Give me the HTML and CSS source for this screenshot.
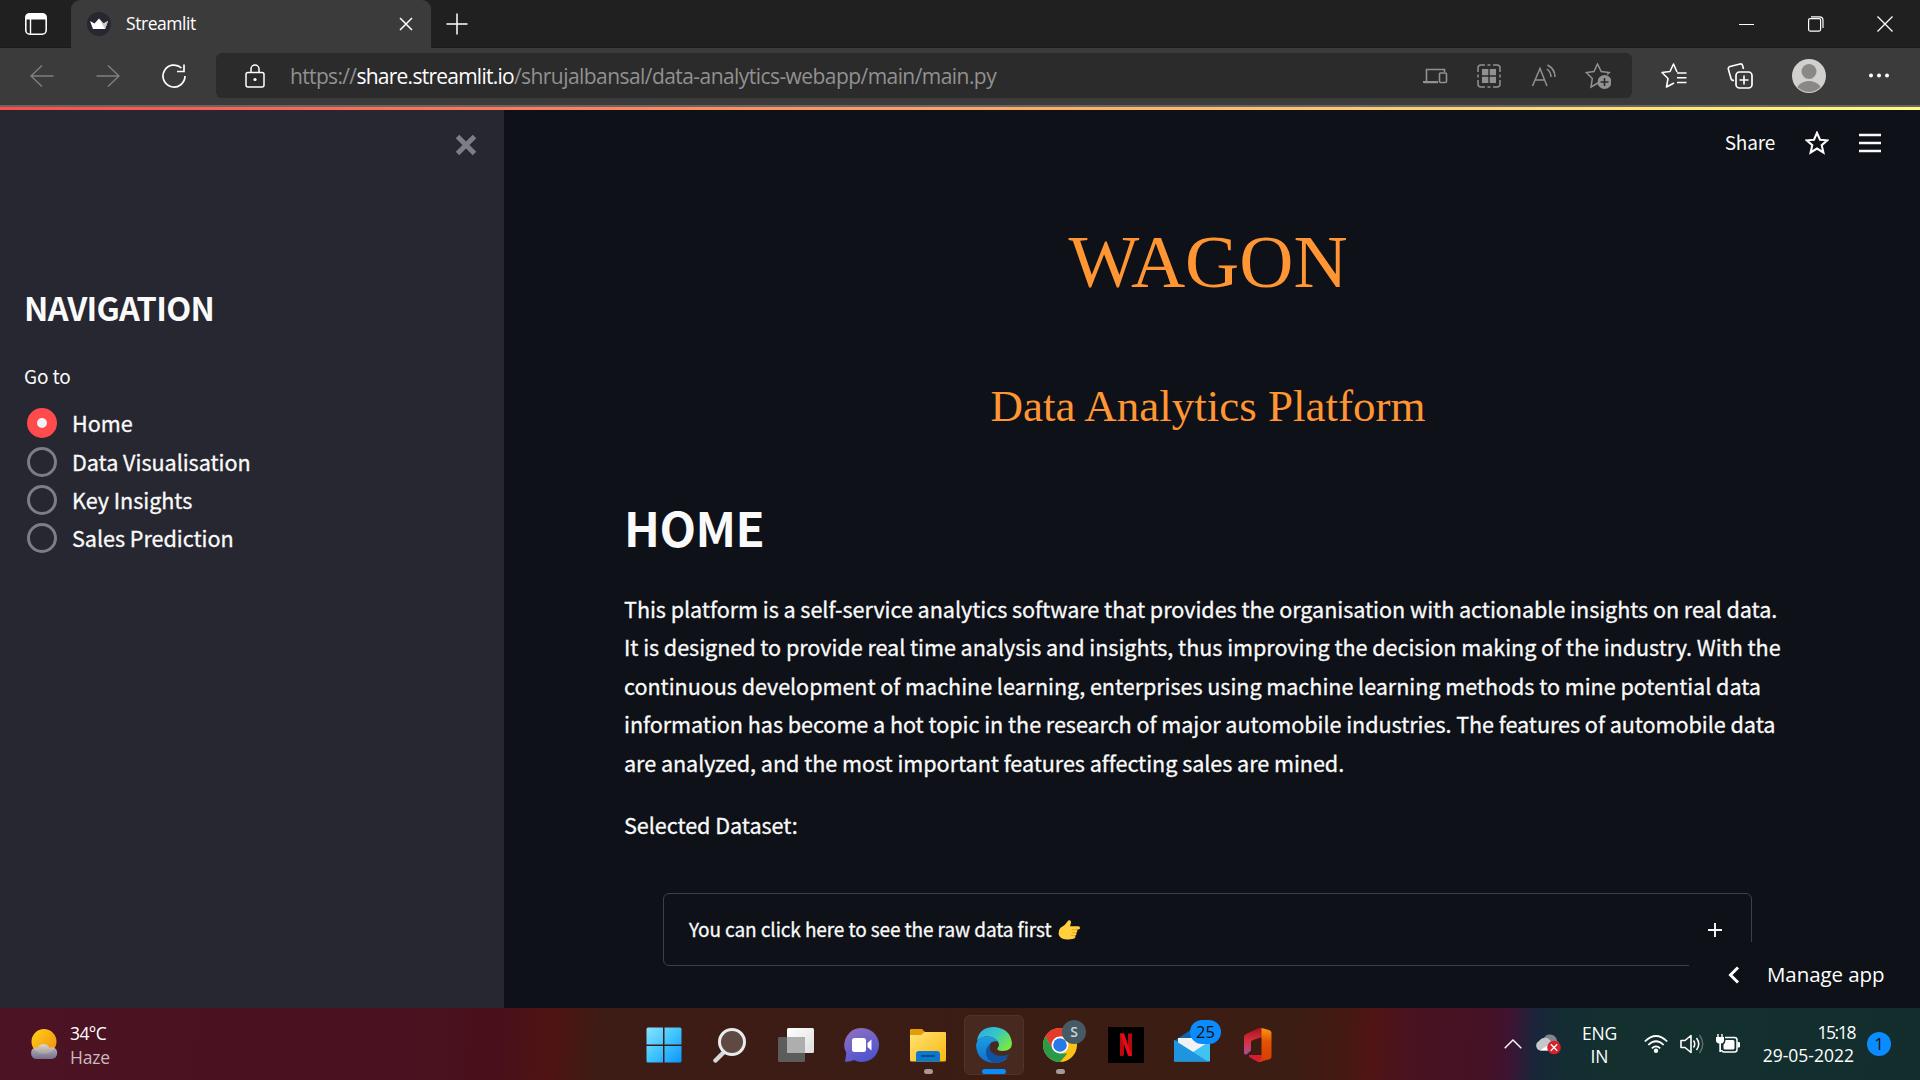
FILE: index.html
```html
<!DOCTYPE html>
<html lang="en">
<head>
<meta charset="utf-8">
<title>Streamlit</title>
<link rel="stylesheet" href="styles.css">
</head>
<body>
<header class="tabbar">
  <div class="tab-actions"><svg width="24" height="24" viewBox="0 0 24 24"><rect x="1.8" y="1.8" width="20.4" height="20.4" rx="4" fill="none" stroke="#fff" stroke-width="1.6"/><path d="M2 7V5q0-3 3-3h14q3 0 3 3v2z" fill="#fff" stroke="#fff" stroke-width="1.2"/><path d="M6.500 7v15" stroke="#fff" stroke-width="1.400"/></svg></div>
  <div class="tab">
    <svg width="24" height="24" viewBox="0 0 24 24"><circle cx="12" cy="12" r="12" fill="#262730"/><path d="M3 9l4.500 2.500L12 6.500l4.500 5L21 9l-3 8H6z" fill="#fff"/><path d="M12 6.500l4.500 5L21 9l-3 8z" fill="#c9c9c9"/></svg>
    <span class="tab-title">Streamlit</span>
    <svg class="tab-close" width="14" height="14" viewBox="0 0 14 14"><path d="M1 1l12 12M13 1L1 13" stroke="#fff" stroke-width="1.500"/></svg>
  </div>
  <svg class="new-tab" width="22" height="22" viewBox="0 0 22 22"><path d="M11 .5v21M.5 11h21" stroke="#fff" stroke-width="1.500"/></svg>
  <div class="window-buttons">
    <svg width="16" height="16" viewBox="0 0 16 16"><path d="M0 8.500h15" stroke="#fff"/></svg>
    <svg width="16" height="16" viewBox="0 0 16 16"><rect x=".6" y="2.600" width="12" height="12.500" rx="1.500" fill="none" stroke="#fff" stroke-width="1.200"/><path d="M3 .8h8.500q3.500 0 3.500 3.500V12" fill="none" stroke="#fff" stroke-width="1.200"/></svg>
    <svg width="16" height="16" viewBox="0 0 16 16"><path d="M.5.5l15 15M15.500.5l-15 15" stroke="#fff" stroke-width="1.300"/></svg>
  </div>
</header>
<nav class="toolbar">
  <svg class="nav-icon dim" viewBox="0 0 24 24"><path d="M23.500 12H1M12 1.500L1 12l11 10.500"/></svg>
  <svg class="nav-icon dim" viewBox="0 0 24 24"><path d="M.5 12H23M12 1.500L23 12 12 22.500"/></svg>
  <svg class="nav-icon" viewBox="0 0 24 24"><path d="M23 12a11 11 0 1 1-3.500-8M22 .5v7h-7" stroke-width="1.700"/></svg>
  <div class="address">
    <svg class="lock" width="20" height="24" viewBox="0 0 20 24"><path d="M3 8.500h14q2 0 2 2V21q0 2-2 2H3q-2 0-2-2V10.500q0-2 2-2zM6 8V5a4 4 0 0 1 8 0v3" fill="none" stroke="#fff" stroke-width="1.500"/><circle cx="10" cy="15.500" r="1.600" fill="#fff"/></svg>
    <div class="url"><span class="scheme">https://</span><span class="host">share.streamlit.io</span><span class="path">/shrujalbansal/data-analytics-webapp/main/main.py</span></div>
    <div class="address-icons">
      <svg viewBox="0 0 26 26"><g fill="none" stroke="#919191" stroke-width="1.600"><path d="M4.500 18V6.500h18V9"/><rect x="17.500" y="10" width="7" height="9.500" rx="1"/></g><path d="M1 18h15v2.300H2q-1 0-1-1z" fill="#919191"/></svg>
      <svg viewBox="0 0 26 26"><path d="M2 9V5q0-3 3-3h4M11.500 2h3M17 2h4q3 0 3 3v4M24 11.500v3M24 17v4q0 3-3 3h-4M14.500 24h-3M9 24H5q-3 0-3-3v-4M2 14.500v-3" fill="none" stroke="#919191" stroke-width="1.500"/><path d="M6 6h6.300v6.300H6zM13.700 6H20v6.300h-6.300zM6 13.700h6.300V20H6zM13.700 13.700H20V20h-6.300z" fill="#919191"/></svg>
      <svg viewBox="0 0 26 26"><path d="M1.500 23L9 5.500 16 23M4 17h10M16 6q4 3 4 8M16.500 2q7.500 4 7.500 12" fill="none" stroke="#919191" stroke-width="1.500"/></svg>
      <svg viewBox="0 0 26 26"><path d="M13 20l-7 4 1.300-8.500L1.200 9.500 9 8.500 12.500 1l3.700 7.500 8 1-2 2" fill="none" stroke="#919191" stroke-width="1.500"/><circle cx="19.500" cy="19" r="7" fill="#919191"/><path d="M19.500 15v8M15.500 19h8" stroke="#2b2b2b" stroke-width="1.600"/></svg>
    </div>
  </div>
  <div class="toolbar-icons">
    <svg viewBox="0 0 26 26"><path d="M13 20l-7.500 4L7 15.500 1 9.500l8-1L12.500 1l3.500 8M16 10h9.500M16 14.700h9.500M16 19.500h9.500" fill="none" stroke="#fff" stroke-width="1.600" stroke-linejoin="round"/></svg>
    <svg viewBox="0 0 26 26"><path d="M7 17.500q-2.500 0-3-2L1.300 6Q1 4 3 3.400L13 1q2-.4 2.600 1.500L16.500 6" fill="none" stroke="#fff" stroke-width="1.600"/><rect x="9" y="9" width="16" height="16" rx="3.500" fill="none" stroke="#fff" stroke-width="1.700"/><path d="M17 12.500v9M12.500 17h9" stroke="#fff" stroke-width="1.600"/></svg>
    <svg class="avatar" viewBox="0 0 34 34"><defs><clipPath id="av"><circle cx="17" cy="17" r="16"/></clipPath></defs><circle cx="17" cy="17" r="17" fill="#d2d0ce"/><circle cx="17" cy="12.500" r="7.500" fill="#8a8886"/><ellipse cx="17" cy="34" rx="13.500" ry="12" fill="#8a8886" clip-path="url(#av)"/></svg>
    <svg viewBox="0 0 26 26"><g fill="#fff"><circle cx="5" cy="12.500" r="2"/><circle cx="13" cy="12.500" r="2"/><circle cx="21" cy="12.500" r="2"/></g></svg>
  </div>
</nav>
<div class="app">
  <aside class="sidebar">
    <svg class="sidebar-close" width="22" height="22" viewBox="0 0 22 22"><path d="M2.500 2.500l17 17M19.500 2.500l-17 17" stroke="#7d7d83" stroke-width="5"/></svg>
    <h1 class="nav-heading">NAVIGATION</h1>
    <div class="goto">Go to</div>
    <ul class="radios">
      <li><i class="radio on"></i><span>Home</span></li>
      <li><i class="radio"></i><span>Data Visualisation</span></li>
      <li><i class="radio"></i><span>Key Insights</span></li>
      <li><i class="radio"></i><span>Sales Prediction</span></li>
    </ul>
  </aside>
  <main class="main">
    <div class="app-header">
      <span class="share">Share</span>
      <svg width="24" height="24" viewBox="0 0 24 24"><path d="M12 1.800l3 6.900 7.300.6-5.600 4.900 1.700 7.300-6.400-3.900-6.400 3.900 1.700-7.300L1.700 9.300 9 8.700z" fill="none" stroke="#fafafa" stroke-width="2.100"/></svg>
      <svg width="22" height="20" viewBox="0 0 22 20"><path d="M0 2h22M0 10h22M0 18h22" stroke="#fafafa" stroke-width="2.500"/></svg>
    </div>
    <div class="brand">WAGON</div>
    <div class="tagline">Data Analytics Platform</div>
    <section class="content">
      <h1 class="home">HOME</h1>
      <p class="intro"><span>This platform is a self-service analytics software that provides the organisation with actionable insights on real data.</span><br>
        <span>It is designed to provide real time analysis and insights, thus improving the decision making of the industry. With the</span><br>
        <span>continuous development of machine learning, enterprises using machine learning methods to mine potential data</span><br>
        <span>information has become a hot topic in the research of major automobile industries. The features of automobile data</span><br>
        <span>are analyzed, and the most important features affecting sales are mined.</span></p>
      <p class="selected">Selected Dataset:</p>
      <div class="expander">
        <span class="exp-label">You can click here to see the raw data first</span>
        <svg class="hand" width="22" height="20" viewBox="0 0 22 20"><path d="M11.500.2q2 .3 1.500 2.500L12 6.300h8.500q1.500.2 1.500 1.600t-1.500 1.700H18q1.600.4 1.400 1.700t-1.900 1.400q1.300.5 1 1.600t-1.700 1.300q1 .6.500 1.600-.5 1.600-3 1.900-3.800.6-7.300.1Q1.500 18.600.6 14 .2 10 2.500 7.800 7 5.600 9.500 1.400 10.200 0 11.500.2z" fill="#ffd03b"/><path d="M19.900 9.600H14M19 12.700h-5M17.500 15.600H13" stroke="#e89f2b" stroke-width=".9"/></svg>
        <svg class="plus" width="14" height="14" viewBox="0 0 14 14"><path d="M7 0v14M0 7h14" stroke="#fafafa" stroke-width="1.900"/></svg>
      </div>
    </section>
    <div class="manage">
      <svg width="12" height="18" viewBox="0 0 12 18"><path d="M10 1.500L2.500 9l7.500 7.500" fill="none" stroke="#fff" stroke-width="3"/></svg>
      <span class="manage-label">Manage app</span>
    </div>
  </main>
</div>
<footer class="taskbar">
  <div class="weather">
    <svg width="30" height="32" viewBox="0 0 30 32"><defs><linearGradient id="sun" x1="0" y1="0" x2="1" y2="1"><stop offset="0" stop-color="#ffd316"/><stop offset="1" stop-color="#f08a10"/></linearGradient><linearGradient id="cl" x1="0" y1="0" x2="0" y2="1"><stop offset="0" stop-color="#d9dde2"/><stop offset="1" stop-color="#7a7a9c"/></linearGradient></defs><circle cx="15" cy="13.500" r="12.500" fill="url(#sun)"/><path d="M7 31a6 6 0 0 1-1-11.500q2 0 2.500.4a6.500 6.500 0 0 1 12 0q1-.7 3-.7A6 6 0 0 1 23 31z" fill="url(#cl)" opacity=".88"/></svg>
    <div class="weather-text"><span class="temp">34°C</span><span class="haze">Haze</span></div>
  </div>
  <div class="apps">
    <div class="app-btn"><svg viewBox="0 0 36 36"><defs><linearGradient id="win" gradientUnits="userSpaceOnUse" x1="0" y1="0" x2="36" y2="36"><stop offset="0" stop-color="#8be4ff"/><stop offset=".5" stop-color="#40c4fd"/><stop offset="1" stop-color="#0a94fb"/></linearGradient></defs><path d="M.5 2Q.5.500 2 .5h15v17H.5zM18.500.5H34q1.500 0 1.500 1.500v15.500h-17zM.5 19H17v16.500H2Q.5 35.500.5 34zM18.500 19h17v15q0 1.500-1.500 1.500H18.500z" fill="url(#win)"/></svg></div>
    <div class="app-btn"><svg viewBox="0 0 36 36"><path d="M3.500 33.500l9-9" stroke="#d5d8da" stroke-width="4.500" stroke-linecap="round"/><circle cx="20" cy="15" r="12.500" fill="#5e4a43" stroke="#e8eaeb" stroke-width="3"/></svg></div>
    <div class="app-btn"><svg viewBox="0 0 36 36"><defs><linearGradient id="tv" x1="0" y1="0" x2="1" y2="1"><stop offset="0" stop-color="#fff"/><stop offset="1" stop-color="#dedede"/></linearGradient></defs><rect x="0" y="10" width="27" height="25" rx="1.500" fill="#5c5c5c"/><rect x="9" y="1" width="27" height="25" rx="1.500" fill="url(#tv)"/><path d="M9 10h18v16H9z" fill="#aeaeae"/></svg></div>
    <div class="app-btn"><svg viewBox="0 0 36 36"><defs><linearGradient id="ch" x1=".2" y1="0" x2=".7" y2="1"><stop offset="0" stop-color="#8f6fc0"/><stop offset="1" stop-color="#4b53d0"/></linearGradient></defs><path d="M18 1a17 17 0 1 1-8 32q-3 2-9 1.700L2.300 26A17 17 0 0 1 18 1z" fill="url(#ch)"/><rect x="8" y="11" width="14" height="14" rx="2.500" fill="#fff"/><path d="M23.500 16l4-3.500v11l-4-3.500z" fill="#fff"/></svg></div>
    <div class="app-btn running"><svg viewBox="0 0 36 36"><defs><linearGradient id="fo" x1="0" y1="0" x2="1" y2="1"><stop offset="0" stop-color="#ffe277"/><stop offset="1" stop-color="#fbb80c"/></linearGradient></defs><path d="M0 3q0-1 1-1h11l4 4v6H0z" fill="#e39d06"/><path d="M0 8h11l3.500-3H35q1 0 1 1v27q0 1.500-1.500 1.500h-33Q0 34.500 0 33z" fill="url(#fo)"/><path d="M6 34.500V27q0-3 3-3h18q3 0 3 3v7.500z" fill="#0a79d0"/><path d="M11 29h14" stroke="#074a86" stroke-width="1.800"/></svg></div>
    <div class="app-btn active"><svg viewBox="0 0 36 36"><defs><linearGradient id="e1" x1="0" y1="0" x2="1" y2=".6"><stop offset="0" stop-color="#31a9e8"/><stop offset=".5" stop-color="#32c5c9"/><stop offset="1" stop-color="#75e844"/></linearGradient><linearGradient id="e2" x1="0" y1="0" x2="0" y2="1"><stop offset="0" stop-color="#1b9de2"/><stop offset="1" stop-color="#0c6fd0"/></linearGradient></defs><path d="M1 14Q3 0 18 0q16 1 18 16 0 8-9.500 8-6 0-5-3 3-3 0-7-4-5-12-4.500Q4 10 1 14z" fill="url(#e1)"/><path d="M0 18Q1 10 9 9.500q9-.5 13 5-7-1-8.500 4-1 8 7 12 5 2.500 11 .5-5 5-13 5Q1 35 0 18z" fill="url(#e2)"/><path d="M14 17q-2 6 4 10 6 3.500 15 .4-5 8.600-15 8.600-8-3-8-10 0-6 4-9z" fill="#12519f"/></svg></div>
    <div class="app-btn running"><svg viewBox="0 0 36 36"><circle cx="18" cy="18" r="17" fill="#fbc116"/><path d="M3.300 9.500A17 17 0 0 1 32.700 9.500H18L10.500 22z" fill="#e33b2e"/><path d="M3.300 9.500L11 22.500 18 26.500h7.300L18 35A17 17 0 0 1 3.300 9.500z" fill="#2a9a48"/><circle cx="18" cy="18" r="8.500" fill="#fff"/><circle cx="18" cy="18" r="6.800" fill="#2a77e8"/></svg><span class="badge badge-s">S</span></div>
    <div class="app-btn"><svg viewBox="0 0 36 36"><path d="M0 0h36v36H0z" fill="#000"/><path d="M12 6.500h4v22l-4 .7zM20 6.500h4v22.700l-4-.7z" fill="#b9090f"/><path d="M12 6.500h4l8 22.700-4-.7z" fill="#e90c17"/></svg></div>
    <div class="app-btn"><svg viewBox="0 0 36 36"><path d="M0 14L18 2l18 12v10H0z" fill="#0e64b4"/><path d="M4 11h28v14H4z" fill="#f2f2f2"/><path d="M0 13l19 12 17-11v20.500H0z" fill="#3ec3f2"/><path d="M0 13l34 21.500H1.500Q0 34.500 0 33z" fill="#1f95e0"/></svg><span class="badge badge-25">25</span></div>
    <div class="app-btn"><svg viewBox="0 0 36 36"><defs><linearGradient id="of" x1="0" y1="0" x2="0" y2="1"><stop offset="0" stop-color="#a8161c"/><stop offset=".5" stop-color="#d92f40"/><stop offset="1" stop-color="#a9509c"/></linearGradient><linearGradient id="og" x1="0" y1="0" x2="0" y2="1"><stop offset="0" stop-color="#f89a10"/><stop offset=".4" stop-color="#e35205"/><stop offset="1" stop-color="#d83b01"/></linearGradient></defs><path d="M4 10q0-2 2-3L19 1h3v9l-9 3q-2 .7-2 2v8.500l-4.500 4Q4 28 4 26z" fill="url(#of)"/><path d="M9 28h13v7h-4l-8-4.500q-1.500-1-1-2.500z" fill="#d51c35"/><path d="M21.500 1l7.500 2q2.500.8 2.500 3v23.500q0 2.300-2.500 3L18 35l3.500-3z" fill="url(#og)"/></svg></div>
  </div>
  <div class="tray">
    <svg class="t-chev" width="18" height="10" viewBox="0 0 18 10"><path d="M.7 9.300L9 1l8.300 8.300" fill="none" stroke="#fff" stroke-width="1.400"/></svg>
    <svg class="t-cloud" width="26" height="22" viewBox="0 0 26 22"><path d="M8 5a7 7 0 0 1 13 3q3 1 2 6l-9-1z" fill="#81868a"/><path d="M5 17.500A5 5 0 0 1 3 8a7 7 0 0 1 11-1l5 10.500z" fill="#c5c8ca"/><path d="M4 17.500l9-6 6 6z" fill="#fff"/><circle cx="18" cy="14.500" r="6.800" fill="#d9212c"/><path d="M14.800 11.300l6.400 6.400M21.200 11.300l-6.400 6.400" stroke="#fff" stroke-width="1.300"/></svg>
    <div class="lang"><span class="eng">ENG</span><span>IN</span></div>
    <svg class="t-wifi" width="24" height="18" viewBox="0 0 24 18"><g fill="none" stroke="#fff" stroke-width="1.700"><path d="M.8 6.500q11.200-11 22.400 0M4.300 10q7.700-7.500 15.400 0M7.800 13.300q4.200-4 8.400 0"/></g><circle cx="12" cy="15.700" r="2.200" fill="#fff"/></svg>
    <svg class="t-vol" width="24" height="20" viewBox="0 0 24 20"><path d="M1 6.500h4L11 1.500v17l-6-5H1z" fill="none" stroke="#fff" stroke-width="1.600" stroke-linejoin="round"/><path d="M13.500 6.500q2.500 3.500 0 7M16.500 4q4.500 6 0 12" fill="none" stroke="#fff" stroke-width="1.500"/><path d="M19.500 1q6.500 9 0 18" fill="none" stroke="#5a6d6c" stroke-width="1.500"/></svg>
    <svg class="t-bat" width="24" height="20" viewBox="0 0 24 20"><path d="M9 3.500h9.500q2.500 0 2.500 2.500v9.500q0 2.500-2.500 2.500H8q-2 0-2.500-2" fill="none" stroke="#fff" stroke-width="1.500"/><path d="M9.500 6H17q1.500 0 1.500 1.500V14q0 1.500-1.500 1.500H9Q7.500 15.500 7.500 14v-3.500Q9.500 9 9.500 6zM21.500 8H23q1 0 1 1v3.500q0 1-1 1h-1.500zM0 3h1.300V0h1.400v3h2.600V0h1.400v3H8v3.500Q8 9 5 9.500V18H3.300V9.500Q0 9 0 6.500z" fill="#fff"/></svg>
    <div class="clock"><span class="time">15:18</span><span class="date">29-05-2022</span></div>
    <span class="notif">1</span>
  </div>
</footer>
</body>
</html>
```
FILE: styles.css
```css
* { box-sizing: border-box; }
body { margin: 0; width: 1920px; height: 1080px; overflow: hidden; display: flex; flex-direction: column; background: #0e1117; color: #fafafa; font-family: "Noto Sans CJK SC", "Noto Sans", sans-serif; }
svg { display: block; flex: none; }
span { white-space: nowrap; }
h1, p, ul { margin: 0; padding: 0; font-weight: 400; }

.tabbar { height: 48px; flex: none; display: flex; align-items: center; background: #202020; border-bottom: 1px solid #1a1a1a; font-family: "Open Sans", sans-serif; }
.tab-actions { width: 71px; padding-left: 24px; }
.tab { width: 360px; height: 48px; margin-bottom: -1px; padding: 0 18px 0 16px; display: flex; align-items: center; background: #3b3b3b; border-radius: 9px 9px 0 0; }
.tab-title { margin-left: 15px; padding-bottom: 2px; font-size: 17.500px; line-height: 24px; letter-spacing: -0.440px; color: #fff; }
.tab-close { margin-left: auto; }
.new-tab { margin-left: 15px; }
.window-buttons { margin-left: auto; padding-right: 27px; display: flex; gap: 53px; }

.toolbar { height: 59px; flex: none; display: flex; align-items: center; padding: 0 0 2px 30px; background: #3b3b3b; border-bottom: 2px solid #666; font-family: "Open Sans", sans-serif; }
.nav-icon { width: 24px; height: 24px; margin-right: 42px; fill: none; stroke: #fff; stroke-width: 1.400; }
.nav-icon.dim { stroke: #808080; }
.address { width: 1416px; height: 45px; margin-left: -12px; padding: 0 21px 0 29px; display: flex; align-items: center; background: #2b2b2b; border-radius: 6px; }
.url { margin-left: 25px; font-size: 21px; line-height: 30px; color: #919191; display: flex; }
.scheme { letter-spacing: -0.650px; }
.host { color: #fff; letter-spacing: -0.750px; }
.path { letter-spacing: -0.560px; }
.address-icons { margin-left: auto; display: flex; gap: 28.500px; }
.address-icons svg, .toolbar-icons svg { width: 26px; height: 26px; }
.toolbar-icons { margin-left: 29px; display: flex; align-items: center; gap: 39.500px; }
.toolbar-icons .avatar { width: 34px; height: 34px; }

.app { flex: 1; display: flex; border-top: 3px solid; border-image: linear-gradient(90deg, #ff4b4b, #fffd80) 1; }
.sidebar { width: 504px; flex: none; background: #262730; padding: 24px 24px 0; display: flex; flex-direction: column; }
.sidebar-close { margin-left: auto; margin-right: 3px; }
.nav-heading { margin-top: 129px; font-size: 32.500px; font-weight: 700; line-height: 44px; letter-spacing: -0.700px; }
.goto { margin-top: 32px; font-size: 19px; line-height: 30px; letter-spacing: -0.100px; }
.radios { list-style: none; margin-top: 13px; padding-left: 3px; }
.radios li { height: 38.400px; display: flex; align-items: center; gap: 15px; font-size: 21.600px; line-height: 38px; letter-spacing: -0.040px; }
.radios span, .intro, .selected, .exp-label { -webkit-text-stroke: 0.300px #fafafa; }
.radio { width: 30px; height: 30px; flex: none; border: 3px solid #7d7d83; border-radius: 50%; }
.radio.on { border: 10.500px solid #ff4b4b; background: #f0f2f6; }

.main { flex: 1; display: flex; flex-direction: column; position: relative; }
.app-header { height: 65px; padding: 0 39px 0 0; display: flex; align-items: center; justify-content: flex-end; gap: 30px; font-size: 19px; }
.share { padding-bottom: 3px; letter-spacing: -0.200px; }
.brand { margin-top: 42px; padding-right: 8px; text-align: center; color: #ff9633; font: 75px/90px "Liberation Serif", serif; }
.tagline { margin-top: 69px; padding-right: 8px; text-align: center; color: #ff9633; font: 45px/60px "Liberation Serif", serif; }
.content { padding: 0 120px; display: flex; flex-direction: column; }
.home { margin-top: 56px; font-size: 47.500px; line-height: 70px; font-weight: 700; letter-spacing: -0.510px; }
.intro, .selected { font-size: 21.600px; line-height: 38.400px; letter-spacing: -0.053px; }
.intro { margin-top: 28px; }
.selected { margin-top: 24px; }
.expander { width: 1089px; height: 73px; margin: 49px 0 0 39px; padding: 0 29px 0 25px; display: flex; align-items: center; border: 1px solid #3e4045; border-radius: 6px; font-size: 19px; letter-spacing: -0.100px; }
.exp-label { padding-bottom: 2px; }
.hand { margin-left: 7px; }
.plus { margin-left: auto; }
.manage { position: absolute; right: 0; bottom: 0; width: 231px; height: 66px; padding-left: 39px; display: flex; align-items: center; background: #0e1117; font: 20.500px/30px "Open Sans", sans-serif; color: #fff; }
.manage-label { margin-left: 27px; padding-bottom: 2px; letter-spacing: -0.080px; }

.taskbar { height: 72px; flex: none; display: flex; background: linear-gradient(93deg, #4b1323 0, #4a1120 400px, #49101b 500px, #4f1412 555px, #3c1c14 600px, #3b1d14 1290px, #451912 1345px, #501414 1372px, #49131f 1405px, #451126 1490px, #3d1433 1510px, #19253a 1535px, #142c33 1560px, #13302f 1610px, #132d2d 1920px); font-family: "Open Sans", sans-serif; color: #fff; }
.weather { width: 634px; padding-left: 29px; display: flex; align-items: center; }
.weather-text { margin-left: 11px; padding-top: 2px; font-size: 17.500px; display: flex; flex-direction: column; line-height: 24px; }
.temp { letter-spacing: -0.600px; }
.haze { color: #cdb9be; letter-spacing: -0.170px; }
.apps { display: flex; gap: 6px; padding-top: 7px; }
.app-btn { width: 60px; height: 60px; padding: 12px; position: relative; border-radius: 6px; }
.app-btn > svg { width: 36px; height: 36px; }
.app-btn.active { background: #47291f; border: 1px solid #503329; padding: 11px; }
.running::after, .active::after { content: ""; position: absolute; left: 50%; bottom: 1px; width: 9px; height: 5px; margin-left: -4.500px; border-radius: 3px; background: #a49a96; }
.active::after { width: 24px; margin-left: -12px; bottom: 0; background: #0a8cff; }
.badge { position: absolute; height: 24px; border-radius: 12px; text-align: center; line-height: 24px; }
.badge-s { left: 32px; top: 5px; width: 24px; background: #455a64; color: #ccd3d6; font-size: 14px; font-weight: 600; }
.badge-25 { left: 28px; top: 5px; width: 31px; background: #0a8cff; color: #111; font-size: 16.500px; }
.tray { margin-left: auto; padding-right: 29px; display: flex; align-items: center; }
.t-cloud { margin-left: 14px; }
.lang { width: 35px; margin-left: 20px; padding-top: 2px; display: flex; flex-direction: column; align-items: center; font-size: 17.500px; line-height: 23.500px; }
.eng { letter-spacing: -0.200px; }
.t-wifi { margin-left: 27px; }
.t-vol { margin-left: 12px; }
.t-bat { margin-left: 12px; }
.clock { width: 94px; margin-left: 20px; margin-right: 1px; display: flex; flex-direction: column; align-items: flex-end; font-size: 17.500px; line-height: 23.500px; }
.time { letter-spacing: -1.400px; margin-right: -1px; }
.notif { width: 24px; height: 24px; margin-left: 12px; border-radius: 50%; background: #0a8cff; color: #111; font-size: 17px; line-height: 24px; text-align: center; }
```
